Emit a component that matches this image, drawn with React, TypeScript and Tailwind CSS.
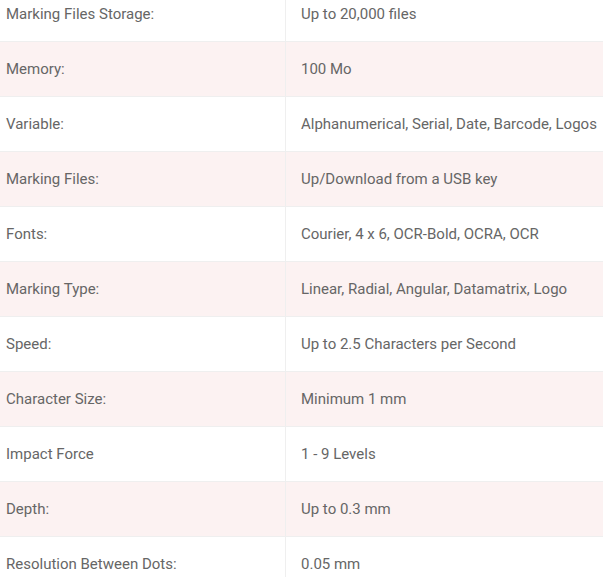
const SPECS: [string, string][] = [
  ["Marking Files Storage:", "Up to 20,000 files"],
  ["Memory:", "100 Mo"],
  ["Variable:", "Alphanumerical, Serial, Date, Barcode, Logos"],
  ["Marking Files:", "Up/Download from a USB key"],
  ["Fonts:", "Courier, 4 x 6, OCR-Bold, OCRA, OCR"],
  ["Marking Type:", "Linear, Radial, Angular, Datamatrix, Logo"],
  ["Speed:", "Up to 2.5 Characters per Second"],
  ["Character Size:", "Minimum 1 mm"],
  ["Impact Force", "1 - 9 Levels"],
  ["Depth:", "Up to 0.3 mm"],
  ["Resolution Between Dots:", "0.05 mm"],
];

export default function App() {
  return (
    <div className="h-[577px] overflow-hidden bg-white [font-family:Roboto,'Liberation_Sans',sans-serif]">
      <div className="-mt-[13px] flex flex-col">
        {SPECS.map(([k, v], i) => (
          <div
            key={k}
            className={
              "flex h-[55px] items-center border-b border-[#efefef] text-[15px] text-[#666] " +
              (i % 2 === 1 ? "bg-[#fcf2f2]" : "bg-white")
            }
          >
            <div className="flex h-full w-[286px] shrink-0 items-center border-r border-[#efefef] pl-[6px]">
              {k}
            </div>
            <div className="pl-[15px]">{v}</div>
          </div>
        ))}
      </div>
    </div>
  );
}
